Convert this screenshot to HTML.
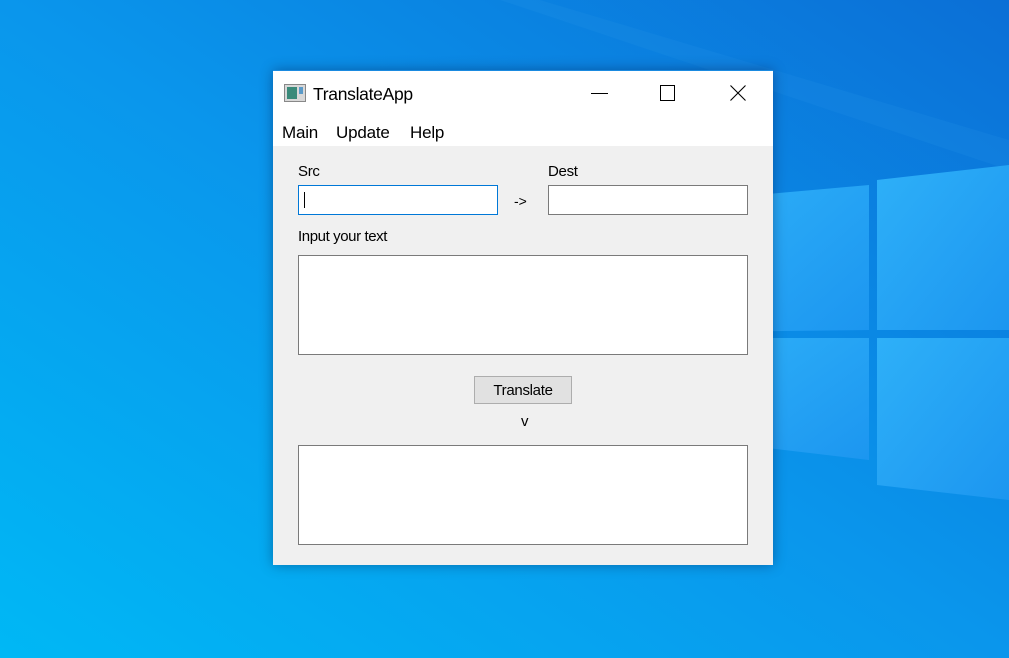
<!DOCTYPE html>
<html><head><meta charset="utf-8"><style>
html,body{margin:0;padding:0;width:1009px;height:658px;overflow:hidden;font-family:"Liberation Sans",sans-serif;}
.bg{position:absolute;left:0;top:0;width:1009px;height:658px;}
.win{position:absolute;left:273px;top:70px;width:500px;height:495px;background:#f0f0f0;box-shadow:0 0 12px rgba(0,0,40,.35);border-top:1px solid #1a8ae0;box-sizing:border-box;}
.title{position:absolute;left:0;top:0;width:500px;height:75px;background:#fff;}
.t{position:absolute;color:#000;white-space:nowrap;}
.box{position:absolute;background:#fff;border:1px solid #7a7a7a;box-sizing:border-box;}
</style></head><body>
<svg class="bg" width="1009" height="658">
<defs>
<linearGradient id="g" x1="0" y1="1" x2="1" y2="0">
<stop offset="0" stop-color="#00b8f5"/><stop offset="0.5" stop-color="#0a96ec"/><stop offset="1" stop-color="#0b6fd6"/>
</linearGradient>
<linearGradient id="p" x1="0" y1="0" x2="1" y2="1">
<stop offset="0" stop-color="#2eb0f8"/><stop offset="1" stop-color="#1c96f0"/>
</linearGradient>
</defs>
<rect width="1009" height="658" fill="url(#g)"/>
<polygon points="540,0 1009,140 1009,170 500,0" fill="#3aa8f0" opacity=".12"/>
<polygon points="700,200 869,185 869,330 700,332" fill="url(#p)"/>
<polygon points="877,180 1009,165 1009,330 877,330" fill="url(#p)"/>
<polygon points="700,338 869,338 869,460 700,440" fill="url(#p)"/>
<polygon points="877,338 1009,338 1009,500 877,485" fill="url(#p)"/>
</svg>
<div class="win">
<div class="title">
<svg style="position:absolute;left:11px;top:13px" width="22" height="18"><rect x="0.5" y="0.5" width="21" height="17" fill="#d8d8d8" stroke="#888"/><rect x="3" y="3" width="10" height="12" fill="#3a8a7a"/><rect x="15" y="3" width="4" height="7" fill="#5a9ac8"/></svg>
<div class="t" style="left:40px;top:13px;font-size:17.5px;letter-spacing:-0.3px;">TranslateApp</div>
<div style="position:absolute;left:318px;top:22px;width:17px;height:1px;background:#000"></div>
<div style="position:absolute;left:387px;top:14px;width:13px;height:14px;border:1px solid #000;"></div>
<svg style="position:absolute;left:457px;top:14px" width="16" height="16"><path d="M0.5 0.5L15.5 15.5M15.5 0.5L0.5 15.5" stroke="#000" stroke-width="1.1"/></svg>
<div class="t" style="left:9px;top:52px;font-size:17px;letter-spacing:-0.2px;">Main</div>
<div class="t" style="left:63px;top:52px;font-size:17px;letter-spacing:-0.2px;">Update</div>
<div class="t" style="left:137px;top:52px;font-size:17px;letter-spacing:-0.2px;">Help</div>
</div>
<div class="t" style="left:25px;top:92px;font-size:15px;letter-spacing:-0.3px;">Src</div>
<div class="t" style="left:275px;top:92px;font-size:15px;letter-spacing:-0.3px;">Dest</div>
<div class="box" style="left:25px;top:114px;width:200px;height:30px;border-color:#0078d7;"><div style="position:absolute;left:5px;top:6px;width:1px;height:16px;background:#000"></div></div>
<div class="t" style="left:241px;top:122px;font-size:14px;">-&gt;</div>
<div class="box" style="left:275px;top:114px;width:200px;height:30px;"></div>
<div class="t" style="left:25px;top:157px;font-size:15px;letter-spacing:-0.4px;">Input your text</div>
<div class="box" style="left:25px;top:184px;width:450px;height:100px;"></div>
<div style="position:absolute;left:201px;top:305px;width:98px;height:28px;background:#e1e1e1;border:1px solid #adadad;box-sizing:border-box;font-size:15px;letter-spacing:-0.3px;text-align:center;line-height:27px;">Translate</div>
<div class="t" style="left:248px;top:342px;font-size:15px;">v</div>
<div class="box" style="left:25px;top:374px;width:450px;height:100px;"></div>
</div>
</body></html>
